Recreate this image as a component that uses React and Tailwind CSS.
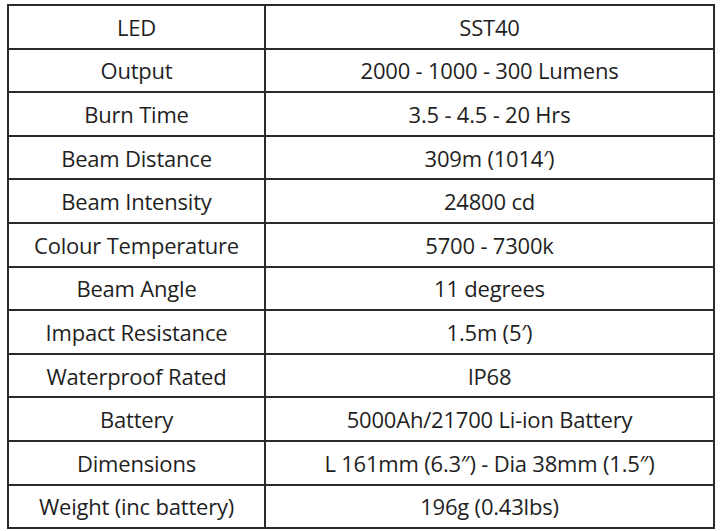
const specs = [
  ["LED", "SST40"],
  ["Output", "2000 - 1000 - 300 Lumens"],
  ["Burn Time", "3.5 - 4.5 - 20 Hrs"],
  ["Beam Distance", "309m (1014\u2032)"],
  ["Beam Intensity", "24800 cd"],
  ["Colour Temperature", "5700 - 7300k"],
  ["Beam Angle", "11 degrees"],
  ["Impact Resistance", "1.5m (5\u2032)"],
  ["Waterproof Rated", "IP68"],
  ["Battery", "5000Ah/21700 Li-ion Battery"],
  ["Dimensions", "L 161mm (6.3\u2033) - Dia 38mm (1.5\u2033)"],
  ["Weight (inc battery)", "196g (0.43lbs)"],
];

export default function App() {
  return (
    <div className="w-[720px] h-[531px] bg-white pt-[4px] pl-[7px] font-['Open_Sans',sans-serif] text-[#1f1f1f]">
      <table className="w-[708px] border-collapse border-2 border-[#2a2a2a] text-[22px] tracking-[-0.2px]">
        <tbody>
          {specs.map(([label, value]) => (
            <tr key={label} className="h-[43.6px]">
              <td className="w-[257px] border-2 border-[#2a2a2a] text-center align-middle leading-none">
                {label}
              </td>
              <td className="border-2 border-[#2a2a2a] text-center align-middle leading-none">
                {value}
              </td>
            </tr>
          ))}
        </tbody>
      </table>
    </div>
  );
}
